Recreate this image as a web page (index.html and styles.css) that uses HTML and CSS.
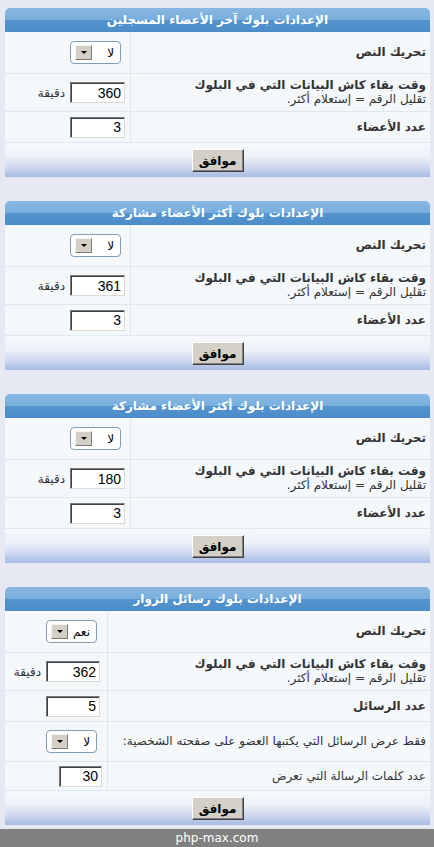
FILE: index.html
```html
<!DOCTYPE html>
<html lang="ar" dir="rtl">
<head>
<meta charset="utf-8">
<title>الإعدادات</title>
<link rel="stylesheet" href="styles.css">
</head>
<body>
<div class="page">

  <section class="panel">
    <h2 class="panel-head">الإعدادات بلوك آخر الأعضاء المسجلين</h2>
    <table class="settings">
      <colgroup><col><col class="c-input"></colgroup>
      <tr class="r-tall"><th>تحريك النص</th><td><span class="select"><span class="select-value">لا</span><span class="select-arrow"></span></span></td></tr>
      <tr class="r-mid"><th>وقت بقاء كاش البيانات التي في البلوك<span class="hint">تقليل الرقم = إستعلام أكثر.</span></th><td><input class="num" type="text" value="360"><span class="unit">دقيقة</span></td></tr>
      <tr class="r-short"><th>عدد الأعضاء</th><td><input class="num" type="text" value="3"></td></tr>
    </table>
    <div class="panel-foot"><button class="btn" type="button">موافق</button></div>
  </section>

  <section class="panel">
    <h2 class="panel-head">الإعدادات بلوك أكثر الأعضاء مشاركة</h2>
    <table class="settings">
      <colgroup><col><col class="c-input"></colgroup>
      <tr class="r-tall"><th>تحريك النص</th><td><span class="select"><span class="select-value">لا</span><span class="select-arrow"></span></span></td></tr>
      <tr class="r-mid"><th>وقت بقاء كاش البيانات التي في البلوك<span class="hint">تقليل الرقم = إستعلام أكثر.</span></th><td><input class="num" type="text" value="361"><span class="unit">دقيقة</span></td></tr>
      <tr class="r-short"><th>عدد الأعضاء</th><td><input class="num" type="text" value="3"></td></tr>
    </table>
    <div class="panel-foot"><button class="btn" type="button">موافق</button></div>
  </section>

  <section class="panel">
    <h2 class="panel-head">الإعدادات بلوك أكثر الأعضاء مشاركة</h2>
    <table class="settings">
      <colgroup><col><col class="c-input"></colgroup>
      <tr class="r-tall"><th>تحريك النص</th><td><span class="select"><span class="select-value">لا</span><span class="select-arrow"></span></span></td></tr>
      <tr class="r-mid"><th>وقت بقاء كاش البيانات التي في البلوك<span class="hint">تقليل الرقم = إستعلام أكثر.</span></th><td><input class="num" type="text" value="180"><span class="unit">دقيقة</span></td></tr>
      <tr class="r-short"><th>عدد الأعضاء</th><td><input class="num" type="text" value="3"></td></tr>
    </table>
    <div class="panel-foot"><button class="btn" type="button">موافق</button></div>
  </section>

  <section class="panel">
    <h2 class="panel-head">الإعدادات بلوك رسائل الزوار</h2>
    <table class="settings settings-wide">
      <colgroup><col><col class="c-input"></colgroup>
      <tr class="r-tall"><th>تحريك النص</th><td><span class="select select-wide"><span class="select-value">نعم</span><span class="select-arrow"></span></span></td></tr>
      <tr class="r-mid"><th>وقت بقاء كاش البيانات التي في البلوك<span class="hint">تقليل الرقم = إستعلام أكثر.</span></th><td><input class="num" type="text" value="362"><span class="unit">دقيقة</span></td></tr>
      <tr class="r-short"><th>عدد الرسائل</th><td><input class="num" type="text" value="5"></td></tr>
      <tr class="r-sel2"><th class="plain">فقط عرض الرسائل التي يكتبها العضو على صفحته الشخصية:</th><td><span class="select"><span class="select-value">لا</span><span class="select-arrow"></span></span></td></tr>
      <tr class="r-last"><th class="plain">عدد كلمات الرسالة التي تعرض</th><td><input class="num num-small" type="text" value="30"></td></tr>
    </table>
    <div class="panel-foot"><button class="btn" type="button">موافق</button></div>
  </section>

</div>
<footer class="site-bar">php-max.com</footer>
</body>
</html>
```

FILE: styles.css
```css
* { box-sizing: border-box; }

html, body {
  margin: 0;
  padding: 0;
}

body {
  width: 434px;
  height: 847px;
  background: #e6e9f1;
  font-family: "DejaVu Sans", "Liberation Sans", sans-serif;
  font-size: 12px;
  color: #333;
  display: flex;
  flex-direction: column;
  overflow: hidden;
}

.page {
  flex: 1;
  display: flex;
  flex-direction: column;
  gap: 24px;
  padding-top: 8px;
  padding-bottom: 4px;
  padding-left: 5px;
  padding-right: 4px;
}

.panel {
  display: flex;
  flex-direction: column;
}

.panel-head {
  margin: 0;
  height: 24px;
  line-height: 24px;
  border-radius: 5px 5px 0 0;
  background: linear-gradient(#88b8e3 0%, #78aedc 50%, #5493ce 50%, #4c8dc9 100%);
  color: #fff;
  font-size: 12px;
  font-weight: bold;
  text-align: center;
}

.settings {
  width: 100%;
  table-layout: fixed;
  border-collapse: separate;
  border-spacing: 0;
  background: #f5f8fb;
}

.c-input { width: 125px; }
.settings-wide .c-input { width: 102px; }

.settings th,
.settings td {
  border-bottom: 1px solid #e1e7ee;
  vertical-align: middle;
  padding: 0;
}

.settings th {
  border-left: 1px solid #e1e7ee;
  padding-right: 4px;
  text-align: right;
  font-weight: bold;
  font-size: 12px;
  color: #333;
  line-height: 13px;
}

.settings th.plain { font-weight: normal; }

.settings td {
  padding-right: 5px;
  white-space: nowrap;
}

.r-tall { height: 42px; }
.r-mid { height: 38px; }
.r-short { height: 31px; }
.r-sel2 { height: 40px; }
.r-last { height: 29px; }

.hint {
  display: block;
  font-weight: normal;
  margin-top: 1px;
}

.select {
  display: inline-flex;
  align-items: center;
  justify-content: space-between;
  width: 51px;
  height: 23px;
  margin-right: 4px;
  padding-right: 6px;
  padding-left: 4px;
  border: 1px solid #7f9db9;
  border-radius: 4px;
  background: #fff;
  vertical-align: middle;
}

.settings-wide .select { margin-right: 5px; }

.select-value {
  font-family: "DejaVu Sans", sans-serif;
  font-size: 12px;
  color: #000;
}

.select-arrow {
  display: flex;
  align-items: center;
  justify-content: center;
  width: 17px;
  height: 15px;
  background: #d4d0c8;
  border: 1px solid;
  border-color: #f4f3ef #7c7a75 #7c7a75 #f4f3ef;
}

.select-arrow::after {
  content: "";
  width: 0;
  height: 0;
  border-left: 3px solid transparent;
  border-right: 3px solid transparent;
  border-top: 3px solid #000;
}

.num {
  width: 55px;
  height: 21px;
  margin: 0;
  padding: 0 3px;
  border: 1px solid;
  border-color: #7a7a7a #dcd9d2 #dcd9d2 #7a7a7a;
  box-shadow: inset 1px 1px 0 #404040;
  background: #fff;
  font-family: "Liberation Sans", sans-serif;
  font-size: 14px;
  color: #000;
  text-align: right;
  vertical-align: middle;
}

.settings-wide .num { margin-right: 2px; width: 54px; }
.settings-wide .num-small { width: 43px; margin-right: 0; }

.unit {
  margin-right: 5px;
  color: #333;
  vertical-align: middle;
}

.panel-foot {
  height: 34px;
  padding-top: 6px;
  text-align: center;
  background: linear-gradient(#f5f8fc 0%, #eef2f9 40%, #ccd8ef 72%, #a6bce3 100%);
}

.btn {
  width: 52px;
  height: 23px;
  padding: 0;
  border: 1px solid;
  border-color: #fff #404040 #404040 #fff;
  box-shadow: inset -1px -1px 0 #808080;
  background: #d4d0c8;
  font-family: "DejaVu Sans", sans-serif;
  font-size: 12px;
  font-weight: bold;
  color: #000;
}

.site-bar {
  height: 18px;
  line-height: 18px;
  background: #808080;
  color: #fff;
  text-align: center;
  font-family: "DejaVu Sans", sans-serif;
  font-size: 12px;
  direction: ltr;
}
```
